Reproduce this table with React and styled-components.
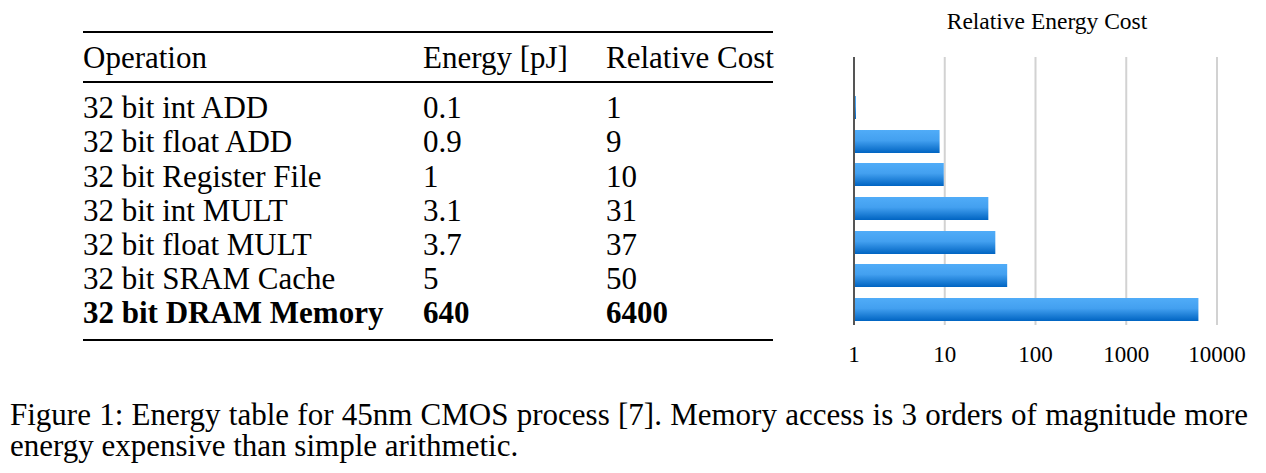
import React from "react";
import styled, {createGlobalStyle} from "styled-components";

const rows = [
    {op: "32 bit int ADD", energy: "0.1", cost: 1},
    {op: "32 bit float ADD", energy: "0.9", cost: 9},
    {op: "32 bit Register File", energy: "1", cost: 10},
    {op: "32 bit int MULT", energy: "3.1", cost: 31},
    {op: "32 bit float MULT", energy: "3.7", cost: 37},
    {op: "32 bit SRAM Cache", energy: "5", cost: 50},
    {op: "32 bit DRAM Memory", energy: "640", cost: 6400, bold: true},
];

const ticks = [1, 10, 100, 1000, 10000];

// chart geometry (px inside the svg)
const AXIS_X = 24;
const DECADE = 90.75;
const PLOT_TOP = 57;
const PLOT_BOTTOM = 325;

const App = () => {
    return (
        <Page>
            <GlobalStyle/>
            <TopRow>
                <TableBlock>
                    <HeaderRow>
                        <Cell>Operation</Cell>
                        <Cell>Energy [pJ]</Cell>
                        <Cell>Relative Cost</Cell>
                    </HeaderRow>
                    <Body>
                        {rows.map((r) => (
                            <Row key={r.op} $bold={r.bold}>
                                <Cell>{r.op}</Cell>
                                <Cell>{r.energy}</Cell>
                                <Cell>{r.cost}</Cell>
                            </Row>
                        ))}
                    </Body>
                </TableBlock>
                <ChartBlock>
                    <svg width="436" height="370" viewBox="0 0 436 370">
                        <defs>
                            <linearGradient id="barFill" x1="0" y1="0" x2="0" y2="1">
                                <stop offset="0" stopColor="#50acf8"/>
                                <stop offset="0.45" stopColor="#43a0f0"/>
                                <stop offset="1" stopColor="#0064c2"/>
                            </linearGradient>
                        </defs>
                        <ChartTitle x="217" y="29" textAnchor="middle">Relative Energy Cost</ChartTitle>
                        {ticks.slice(1).map((t, i) => (
                            <line key={t} x1={AXIS_X + (i + 1) * DECADE} x2={AXIS_X + (i + 1) * DECADE}
                                  y1={PLOT_TOP} y2={PLOT_BOTTOM} stroke="#d2d2d2" strokeWidth="2"/>
                        ))}
                        {rows.map((r, i) => {
                            const w = Math.max(3, Math.log10(r.cost) * DECADE);
                            const y = Math.round(96 + i * 33.67);
                            return <rect key={r.op} x={AXIS_X - 1} y={y} width={w} height="23" fill="url(#barFill)"/>;
                        })}
                        <line x1={AXIS_X} x2={AXIS_X} y1={PLOT_TOP} y2={PLOT_BOTTOM} stroke="#555" strokeWidth="2"/>
                        {ticks.map((t, i) => (
                            <TickLabel key={t} x={AXIS_X + i * DECADE} y="362" textAnchor="middle">{t}</TickLabel>
                        ))}
                    </svg>
                </ChartBlock>
            </TopRow>
            <Caption>
                Figure 1: Energy table for 45nm CMOS process [7]. Memory access is 3 orders of magnitude more
                energy expensive than simple arithmetic.
            </Caption>
        </Page>
    );
};

export default App;

const GlobalStyle = createGlobalStyle`
    html, body {
        margin: 0;
        padding: 0;
        background: #ffffff;
    }
    body {
        font-family: "Liberation Serif", "Times New Roman", serif;
        color: #000;
    }
`;

const Page = styled.div`
    width: 1266px;
    height: 473px;
    overflow: hidden;
`;

const TopRow = styled.div`
    display: flex;
    align-items: flex-start;
`;

const TableBlock = styled.div`
    margin-left: 83px;
    margin-top: 31px;
    width: 690px;
    border-top: 2px solid #000;
    border-bottom: 2px solid #000;
    font-size: 31px;
    line-height: 34.2px;
`;

const HeaderRow = styled.div`
    display: grid;
    grid-template-columns: 340px 183px 1fr;
    padding: 8px 0 6px;
    border-bottom: 2px solid #000;
`;

const Body = styled.div`
    padding: 8px 0 8px;
`;

const Row = styled.div`
    display: grid;
    grid-template-columns: 340px 183px 1fr;
    font-weight: ${(p) => (p.$bold ? 700 : 400)};
`;

const Cell = styled.div`
    white-space: nowrap;
`;

const ChartBlock = styled.div`
    margin-left: 57px;
    width: 436px;
    height: 370px;

    svg {
        display: block;
    }
`;

const ChartTitle = styled.text`
    font-family: "Liberation Serif", "Times New Roman", serif;
    font-size: 23.5px;
    fill: #000;
`;

const TickLabel = styled.text`
    font-family: "Liberation Serif", "Times New Roman", serif;
    font-size: 23px;
    fill: #000;
`;

const Caption = styled.p`
    margin: 29px 0 0 10px;
    width: 1238px;
    font-size: 31px;
    line-height: 31px;
    text-align: justify;
`;
